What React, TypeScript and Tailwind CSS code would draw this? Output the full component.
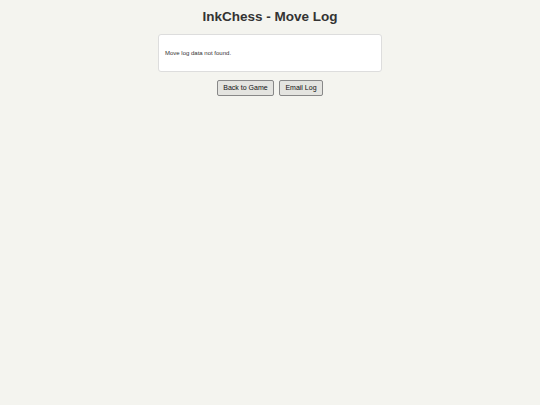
export default function App() {
  return (
    <div className="min-h-[405px] bg-[#f4f4ef] pt-[8px] font-['Liberation_Sans',Arial,sans-serif] text-[#333]">
      <h1 className="text-center text-[13.5px] font-bold leading-[17px] text-[#333]">InkChess - Move Log</h1>
      <div className="mx-auto mt-[9px] w-[224px] h-[38px] rounded-[3px] border border-[#dddddd] bg-white px-[6px] flex items-center">
        <p className="text-[6px] text-[#333]">Move log data not found.</p>
      </div>
      <div className="mt-[8px] flex justify-center gap-[5px]">
        <button className="h-[16px] w-[57px] rounded-[2px] border border-[#888] bg-[#e4e4e0] text-[7px] text-[#111]">Back to Game</button>
        <button className="h-[16px] w-[44px] rounded-[2px] border border-[#888] bg-[#e4e4e0] text-[7px] text-[#111]">Email Log</button>
      </div>
    </div>
  );
}
